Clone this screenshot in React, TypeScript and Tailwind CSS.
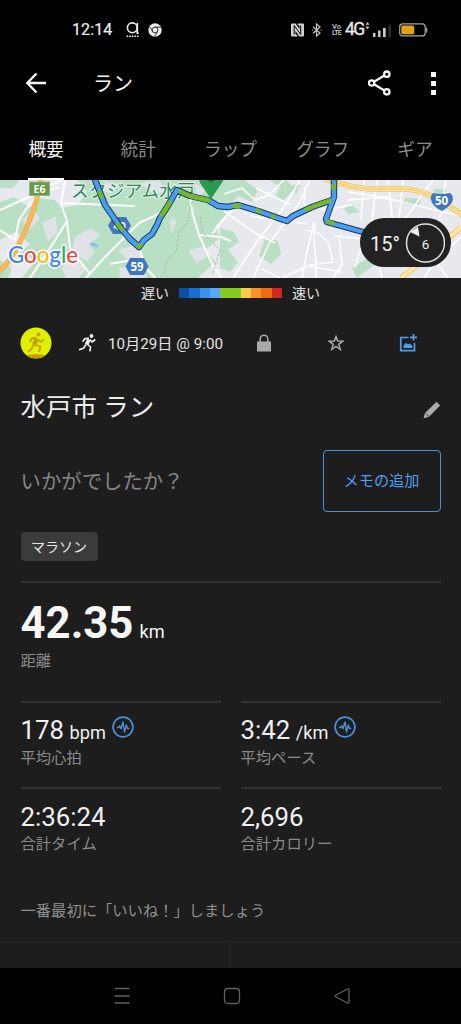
const tabs = ['概要', '統計', 'ラップ', 'グラフ', 'ギア'];

const paceColors = [
  'bg-[#0b4fa3]',
  'bg-[#1a6fd0]',
  'bg-[#3b93ee]',
  'bg-[#56a6fb]',
  'bg-[#84cc1f]',
  'bg-[#84cc1f]',
  'bg-[#fbcb4b]',
  'bg-[#f9902a]',
  'bg-[#ee6c10]',
  'bg-[#d42424]',
];

function StatusBar() {
  return (
    <div className="flex h-[59px] items-center pl-[72px] text-[#ececec]">
      <span className="w-[54px] text-[16px] tracking-[0.1px] [-webkit-text-stroke:0.2px]">12:14</span>
      <svg className="h-4 w-[14px]" viewBox="0 0 14 16" fill="none" stroke="currentColor">
        <circle cx="6.3" cy="5.8" r="4.9" strokeWidth="1.6" />
        <path d="M11.3 1v10.2h1.4" strokeWidth="1.7" />
        <path d="M.5 14.2h13" strokeWidth="1.6" strokeDasharray="1.6 1" />
      </svg>
      <svg className="ml-[8px] h-[14px] w-[14px]" viewBox="0 0 14 14">
        <circle cx="7" cy="7" r="6.7" fill="#ececec" />
        <g fill="none" stroke="#222" strokeWidth=".9">
          <circle cx="7" cy="7" r="2.9" />
          <path d="M7 4.1h6M4.5 8.4 1.6 3.4M9.5 8.4l-2.8 5" />
        </g>
      </svg>

      <svg className="ml-[129px] h-[14px] w-[13px]" viewBox="0 0 13 14">
        <path d="M1 .5h3.600L8.500 6V3l-2-1.500V.5H12q1 0 1 1v11q0 1-1 1H8.400L4.500 8v3l2 1.500v1H1q-1 0-1-1v-11q0-1 1-1z" fill="#d2d2d2" />
        <path d="M3.200 11.500V2.500l6.500 9v-9" fill="none" stroke="#000" strokeWidth="1" />
      </svg>
      <svg className="ml-[8px] h-[14px] w-[10px]" viewBox="0 0 10 14" fill="none" stroke="#c4c4c4" strokeWidth="1.2">
        <path d="M1 3.800 8 10l-3.500 3V1L8 4 1 10.200" />
        <path d="M0 7h1.200M8.600 7h1.200" />
      </svg>
      <div className="ml-[9px] flex w-[11px] flex-col items-center text-[7.5px] font-medium leading-[7px] text-[#cfcfcf]">
        <span>Vo</span>
        <span className="text-[7px] tracking-[-0.7px]">LTE</span>
      </div>
      <span className="ml-[3px] w-[20px] text-[17.5px] tracking-[-1.5px] [-webkit-text-stroke:0.3px]">4G</span>
      <svg className="-mt-[8px] h-[8px] w-[5px]" viewBox="0 0 5 8" fill="#c8c8c8">
        <path d="M2.500 0 4.500 2.800h-4zM2.500 7.300.5 4.500h4z" />
      </svg>
      <svg className="ml-[3px] mt-[3px] h-[12px] w-[19px]" viewBox="0 0 19 12" fill="#c8c8c8">
        <path d="M0 8h2.500v4H0zM5 5.500h2.500V12H5zM10 3h2.700v9H10z" />
        <path d="M15.500 0H18v12h-2.500z" fill="#2c2c2c" />
      </svg>
      <svg className="ml-[7px] h-[14px] w-[29px]" viewBox="0 0 29 14">
        <rect x=".7" y=".9" width="25.5" height="12" rx="3" fill="none" stroke="#a8a8a8" strokeWidth="1.2" />
        <rect x="2.3" y="2.5" width="13" height="8.8" rx="1.5" fill="#dfa218" />
        <path d="M27.300 4.500c1 1 1 4 0 5z" fill="#a8a8a8" stroke="#a8a8a8" strokeWidth=".7" />
      </svg>
    </div>
  );
}

function AppBar() {
  return (
    <header className="flex h-[48px] items-center pl-[25px] text-[#f4f4f4]">
      <svg className="h-[22px] w-[22px]" viewBox="0 0 22 22" fill="none" stroke="currentColor" strokeWidth="2.4">
        <path d="M21 11H3M11.500 1.500 2.300 11l9.200 9.500" />
      </svg>
      <h1 className="ml-[46px] pt-[2px] text-[20px] leading-none">ラン</h1>
      <svg className="ml-auto h-[28px] w-[26px]" viewBox="0 0 26 28" fill="none" stroke="currentColor" strokeWidth="2.3">
        <circle cx="3.6" cy="14" r="2.7" />
        <circle cx="18.8" cy="5.2" r="2.7" />
        <circle cx="18.8" cy="22.800" r="2.7" />
        <path d="m6 12.700 10.400-6.100M6 15.300l10.400 6.100" />
      </svg>
      <div className="ml-[37px] mr-[25.5px] flex flex-col gap-[4px]">
        <i className="h-[5px] w-[5px] bg-white" />
        <i className="h-[5px] w-[5px] bg-white" />
        <i className="h-[5px] w-[5px] bg-white" />
      </div>
    </header>
  );
}

function Tabs() {
  return (
    <nav className="grid h-[73px] grid-cols-5 pt-[13px]">
      {tabs.map((tab, i) => (
        <div key={tab} className="flex flex-col items-center">
          <span className={i === 0 ? 'h-[58px] text-[17.7px] leading-[61px] text-[#f4f4f4]' : 'text-[17.7px] leading-[61px] text-[#8d8d8d]'}>
            {tab}
          </span>
          {i === 0 && <span className="h-[2px] w-[36px] bg-white" />}
        </div>
      ))}
    </nav>
  );
}

const route = 'M94 -3 101 15 105 25 112 35 120 47 130 59 139 67 144 60 152 54 157 45 160 38 169 24 177 10 190 16 208 20 218 26 228 27 238 25 248 28 258 31 278 38 287 41 293 36 312 27 332 20M334 -3 334 17 326 39 327 42 345 47 370 54';

function RouteMap() {
  return (
    <div className="relative h-[98px]">
      <svg className="block h-[98px] w-[461px]" viewBox="0 0 461 98">
        <rect width="461" height="98" fill="#e7e9ee" />
        <path
          fill="#b9dfc5"
          d="M0 22 14 17 30 28 38 18 55 20 62 28 78 25 87 12 78 0H245L232 14 226 35 215 46 220 58 205 70 215 82 198 98H70L78 82 62 88 66 98H22L36 80 20 73 30 64 16 52 0 60zM0 80l12 8-4 10H0zM0 0h20l-7 8H0z"
        />
        <path
          fill="#b9dfc5"
          d="m244 0 14 10-6 12-14-6-9 10-8-8 10-18zM220 48l14 4 5 10-11 8 10 12-8 10-10-4zM270 0h16l9 8-12 13-8-5 5-8zM265 58l13 3 3 13-10 10-12-8zM293 5h7l-4 10zM344 28l8-3 8 7-12 2zM405 18l16 1-2 8-15-3zM434 9h13l-4 8-8-2zM352 88l22-14 8 5-25 19z"
        />
        <path
          fill="#dfe3e8"
          d="m75 57 15-9 11 7-12 9 6 9-8 8-15-9zM118 70l16-5 9 12-11 7zM62 82l15-3 10 9-8 10H66zM120 88l20-4 7 14h-28zM140 3l20-3 5 14-14-2zM195 3l11 7-10 9zM189 70l15-4 4 10-12 8zM170 38l7 3-6 13zM106 2l14 2-9 10-9-4zM42 43l14-7 1 17-9 8zM22 40l12-10 6 8-11 12z"
        />
        <g fill="none" stroke="#fff" strokeWidth="2" strokeLinejoin="round">
          <path d="M0 30 20 21 38 13 60 7M0 50 15 60 19 40 29 25 44 8 62 0M30 98l22-33 15-24-6-17 4-24M60 23l75 3M67 41 70 68 90 94M86 98 103 79 139 43 165 31M139 67l7 21 9 10M190 18l3 17 6 20 14 31 9 12M199 55l22 2 10 4M212 54l16-20 14-11M110 84l27-5" />
          <path
            d="m224 14 18-6 13 12 14-5 15-15M233 98l23-35 30-39 14-24M253 98l16-34 29-39 12-25M224 31l31 22 20 10M256 8l35 17M316 98V82l-2-22 1-18M305 7l-1 17 22 6 26-5M305 50l12 2 11 10 5 20-23 3M335 56l29 3-9 28M314 42l-7 30-5 26M364 0l-3 40M377 0l-7 56M388 0l5 44M403 0l-4 39M348 12l33 5 80 19M348 20l40-3M433 0l-28 39M446 0l-7 45M382 98l-8-31M399 98l13-14M438 85l10 13M424 98l12-18 25-23M262 89l18 9M282 98l26-12 34 6M250 36l57 8M339 58l3 26-9 14"
            strokeWidth="1.6"
          />
        </g>
        <path d="M41-2C38 20 30 43 18 66 12 78 6 86-2 92" fill="none" stroke="#eda83a" strokeWidth="5" />
        <path d="M41-2C38 20 30 43 18 66 12 78 6 86-2 92" fill="none" stroke="#f7b85b" strokeWidth="4" />
        <g fill="none">
          <path d="M325-1c19 6 35 11 57 10 27-1 40 0 57 12 13 6 17 9 24 15M401 98l25-20 35-31" stroke="#eec15c" strokeWidth="5.5" />
          <path d="M325-1c19 6 35 11 57 10 27-1 40 0 57 12 13 6 17 9 24 15M401 98l25-20 35-31" stroke="#ffe6a3" strokeWidth="3.8" />
          <path d="M325-1c19 6 35 11 57 10 27-1 40 0 57 12 13 6 17 9 24 15" stroke="#edb850" strokeWidth=".8" />
        </g>
        <path d="M92 64l5 2M270 37l5-2" stroke="#91bdec" strokeWidth="3" strokeLinecap="round" />
        <path d="m192 22-5 20-8 10-3 20-9 8-3 13M200 36l3 17 17 17-8 25" fill="none" stroke="#a6b9b2" strokeDasharray="3 1.5" />

        <rect x="29.5" y="2" width="20" height="13.5" fill="#679b4e" stroke="#8eb97a" />
        <text x="39.5" y="12.7" textAnchor="middle" fontSize="10.5" fontWeight="700" fill="#fff" fontFamily="'Noto Sans', sans-serif">E6</text>
        <text x="71" y="17" fontSize="17.5" fill="#31835c" stroke="#e4f3e9" strokeWidth="2" paintOrder="stroke" textLength="124" fontFamily="Roboto, 'Noto Sans CJK JP', sans-serif">
          スタジアム水戸
        </text>
        <path d="M199-2h24v3l-12 18L200 3z" fill="#2b9a51" />
        <circle cx="211" cy="-2" r="4" fill="#15693a" />
        <path d="m113 37h13l5 8.500-5 8.500h-13l-5-8.500z" fill="#3f76be" />
        <text x="119.5" y="50" textAnchor="middle" fontSize="11" fontWeight="700" fill="#fff" fontFamily="'Noto Sans', sans-serif">40</text>
        <path d="M130 78h14l4.500 8.500L144 95h-14l-4.500-8.500z" fill="#3f76be" />
        <text x="137" y="90.700" textAnchor="middle" fontSize="11.5" fontWeight="700" fill="#fff" fontFamily="'Noto Sans', sans-serif">59</text>
        <path d="M433 13q9 2 17 0 3 2 3 7-2 6-11 11-9-4-11-11-1-4 2-7z" fill="#3f76be" />
        <text x="441.5" y="24.700" textAnchor="middle" fontSize="11.5" fontWeight="700" fill="#fff" fontFamily="'Noto Sans', sans-serif">50</text>

        <g fill="none" strokeLinejoin="round">
          <path d={route} stroke="#173a4d" strokeWidth="6.4" />
          <path d={route} stroke="#4b9ef5" strokeWidth="4.4" />
          <path
            d="M99 11 102 18M117 43 123 51M137 65 139 67 141 64M161 36 171 21M179 11 190 16 208 20 210 21M233 26 241 26M256 30 261 32M271 36 275 37M305 30 312 27 331 20M333.500 4 333.500 10M327 41 334 44"
            stroke="#78b62b"
            strokeWidth="4.4"
          />
        </g>
        <text x="8" y="83" fontSize="23.5" fontWeight="500" stroke="#fff" strokeWidth="3" strokeLinejoin="round" paintOrder="stroke" textLength="70" lengthAdjust="spacingAndGlyphs" fontFamily="Lato, sans-serif">
          <tspan fill="#4285f4">G</tspan>
          <tspan fill="#e8453c">o</tspan>
          <tspan fill="#f5b912">o</tspan>
          <tspan fill="#4285f4">g</tspan>
          <tspan fill="#34a853">l</tspan>
          <tspan fill="#e8453c">e</tspan>
        </text>
      </svg>
      <div className="absolute left-[360px] top-[38px] flex h-[49px] w-[91px] items-center rounded-full bg-[#222] pl-[10px] text-[#f0f0f0]">
        <span className="w-[35px] pt-[2px] text-[20px]">15°</span>
        <svg className="h-[40px] w-[40px]" viewBox="0 0 40 40">
          <circle cx="20.5" cy="20" r="19" fill="none" stroke="#e2e2e2" strokeWidth="1.5" />
          <path d="M5 9 13 3.500l1.500 10z" fill="#eee" />
          <text x="20.5" y="25.5" textAnchor="middle" fontSize="13.5" fill="#eee">6</text>
        </svg>
      </div>
    </div>
  );
}

function PaceLegend() {
  return (
    <div className="flex h-[30px] items-center text-[14px] text-[#e2e2e2]">
      <span className="ml-[141px] w-[38px]">遅い</span>
      <div className="flex h-[10px] w-[103px]">
        {paceColors.map((color, i) => (
          <i key={i} className={`h-full flex-1 ${color}`} />
        ))}
      </div>
      <span className="ml-[10px]">速い</span>
    </div>
  );
}

function ActivityMeta() {
  return (
    <div className="flex h-[70px] items-center pl-[20px]">
      <svg className="h-[32px] w-[32px]" viewBox="0 0 32 32">
        <circle cx="16" cy="16" r="15.5" fill="#e1f000" />
        <path d="M7 28.500q9-2.500 18 0-9 5.500-18 0z" fill="#c89800" />
        <g fill="none" stroke="#c0a012" strokeLinejoin="round">
          <circle cx="18.5" cy="7.5" r="2" fill="#c0a012" stroke="none" />
          <path d="m16.500 12-2.500 6" strokeWidth="4" />
          <path d="M16.500 11h-4L9.500 15M17.500 12l2.500 3 4-2.500M15 18l5.500 1.500-1.500 5.500M13.500 18l-2 4-3.500 3" strokeWidth="1.8" />
        </g>
      </svg>
      <svg className="ml-[26px] h-[20px] w-[19px]" viewBox="0 0 19 20" fill="none" stroke="#f1f1f1" strokeLinejoin="round">
        <circle cx="13.5" cy="3" r="1.9" fill="#f1f1f1" stroke="none" />
        <path d="m11 6.500-2.500 5" strokeWidth="3.8" />
        <path d="M11 5.400 7 5.600 4.600 8.700M12 6.500l2 2.500 3.300-2.500M9 11l3.600 3-.8 4.300M8 11.500l-2.500 3.700L1 16.700" strokeWidth="1.6" />
      </svg>
      <span className="ml-[11px] w-[148px] pt-[2px] text-[15.2px] text-[#e5e5e5]">10月29日 @ 9:00</span>
      <svg className="h-[18px] w-[16px]" viewBox="0 0 16 18">
        <rect x="1" y="7.5" width="14" height="10" fill="#aaa" />
        <path d="M4.200 8V5a3.800 3.800 0 0 1 7.600 0v3" fill="none" stroke="#aaa" strokeWidth="1.6" />
      </svg>
      <svg className="ml-[56px] h-[16px] w-[16px]" viewBox="0 0 16 16" fill="none" stroke="#aaa" strokeWidth="1.5">
        <path d="m8 1.600 1.700 4.500 5 .2-3.900 3.100 1.400 5-4.200-2.900-4.200 2.900 1.400-5-3.900-3.100 5-.2z" />
      </svg>
      <svg className="ml-[55px] h-[19px] w-[19px]" viewBox="0 0 19 19" fill="none" stroke="#4f9eea" strokeWidth="1.7">
        <path d="M9.500 3.500H1.800v13.200H15.500V9M14.500 0v6.500M11 3.300h7" />
        <path d="M4.500 14v-2.500L7 8.800l2 1.800 1.300-1 3 2V14z" fill="#4f9eea" stroke="none" />
      </svg>
    </div>
  );
}

function PulseIcon() {
  return (
    <svg className="-mt-[10px] ml-[6px] h-[22px] w-[22px]" viewBox="0 0 22 22" fill="none" stroke="#4a90d9" strokeLinejoin="round">
      <circle cx="11" cy="11" r="9.9" strokeWidth="1.7" />
      <path d="M4.800 11.500h1.700l1.200-1.700 1.300 3 2-6.800 1.500 10L14.300 9l1.200 3.500h1.800" strokeWidth="1.4" />
    </svg>
  );
}

interface StatProps {
  value: string;
  label: string;
  unit?: string;
}

function Stat({ value, label, unit }: StatProps) {
  return (
    <div className="h-[86px] border-t-2 border-[#333] pt-[13px]">
      <div className="flex h-[31px] items-center">
        <p className="whitespace-nowrap text-[25.8px] leading-[31px] text-[#f0f0f0]">
          {value}
          {unit && <span className="ml-[5.5px] text-[18.2px]">{unit}</span>}
        </p>
        {unit && <PulseIcon />}
      </div>
      <p className="text-[15.3px] leading-[22px] text-[#8b8b8b]">{label}</p>
    </div>
  );
}

function SystemNav() {
  return (
    <div className="flex h-[56px] items-center bg-black pl-[113px]">
      {[
        'M1.500 1.500h15M1.500 9h15M1.500 16h15',
        'M5 1.500h8Q16.500 1.500 16.500 5v8q0 3.500-3.500 3.500H5q-3.500 0-3.500-3.500V5Q1.500 1.500 5 1.500z',
        'M14.500 2 3 8q-2 1 0 2l11.500 6q1.500.7 1.500-1V3q0-1.700-1.500-1z',
      ].map((d) => (
        <svg key={d} className="mr-[92px] h-[18px] w-[18px] shrink-0" viewBox="0 0 18 18" fill="none" stroke="#606060" strokeWidth="1.3">
          <path d={d} />
        </svg>
      ))}
    </div>
  );
}

export default function App() {
  return (
    <div
      lang="ja"
      className="flex h-[1024px] w-[461px] flex-col overflow-hidden bg-[#1d1d1d] font-[Roboto,'Noto_Sans_CJK_JP',sans-serif]"
    >
      <div className="bg-black">
        <StatusBar />
        <AppBar />
        <Tabs />
      </div>
      <RouteMap />
      <PaceLegend />
      <ActivityMeta />

      <main className="px-[20.5px]">
        <div className="flex h-[58px] items-center justify-between">
          <h2 className="pt-[2px] text-[25.5px] leading-none text-[#ededed]">水戸市 ラン</h2>
          <svg className="mt-[6px] h-[18px] w-[18px]" viewBox="0 0 18 18" fill="#aaa">
            <path d="m13.500.8 3.700 3.700L6 15.700.5 17.500 2 12z" />
            <path d="m3 12.500 3 3" stroke="#1d1d1d" strokeWidth=".8" />
          </svg>
        </div>
        <div className="mt-[14px] flex h-[62px] items-center justify-between">
          <p className="pt-[2px] text-[20.4px] text-[#858585]">いかがでしたか？</p>
          <button className="h-[62px] w-[118px] rounded-[4px] border-[1.5px] border-[#4a90d9] pt-px text-[15.2px] text-[#4f9eea]">
            メモの追加
          </button>
        </div>
        <div className="mt-[20px] flex h-[29px] w-[77px] items-center justify-center rounded-[4px] bg-[#3b3b3b] pt-px text-[14px] text-[#e8e8e8]">
          マラソン
        </div>
        <div className="mt-[20px] h-[120px] border-t-2 border-[#333] pt-[15px]">
          <p className="h-[51px] text-[43.7px] font-bold leading-[51px] text-[#f5f5f5]">
            42.35<span className="ml-[6px] text-[18.2px] font-normal">km</span>
          </p>
          <p className="text-[15.3px] leading-[25px] text-[#8b8b8b]">距離</p>
        </div>
        <div className="grid grid-cols-2 gap-x-[20px]">
          <Stat value="178" unit="bpm" label="平均心拍" />
          <Stat value="3:42" unit="/km" label="平均ペース" />
          <Stat value="2:36:24" label="合計タイム" />
          <Stat value="2,696" label="合計カロリー" />
        </div>
        <p className="mt-[27px] text-[15.3px] leading-[22px] text-[#8f8f8f]">一番最初に「いいね！」しましょう</p>
      </main>

      <div className="mt-auto grid h-[27px] shrink-0 grid-cols-2 border-t-2 border-[#232323]">
        <div className="border-r-2 border-[#232323]" />
      </div>
      <SystemNav />
    </div>
  );
}
